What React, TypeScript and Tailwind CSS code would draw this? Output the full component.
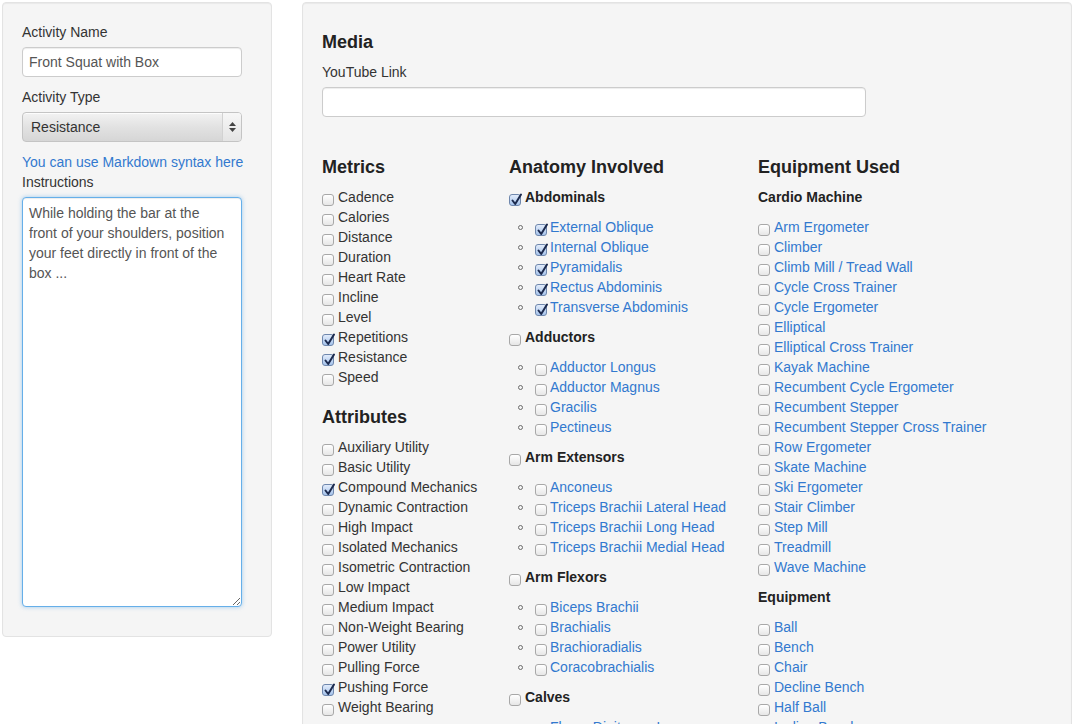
import React from 'react';

type Item = [string, boolean];

const metrics: Item[] = [
  ['Cadence', false], ['Calories', false], ['Distance', false], ['Duration', false],
  ['Heart Rate', false], ['Incline', false], ['Level', false], ['Repetitions', true],
  ['Resistance', true], ['Speed', false],
];

const attributes: Item[] = [
  ['Auxiliary Utility', false], ['Basic Utility', false], ['Compound Mechanics', true],
  ['Dynamic Contraction', false], ['High Impact', false], ['Isolated Mechanics', false],
  ['Isometric Contraction', false], ['Low Impact', false], ['Medium Impact', false],
  ['Non-Weight Bearing', false], ['Power Utility', false], ['Pulling Force', false],
  ['Pushing Force', true], ['Weight Bearing', false],
];

const anatomy: { name: string; checked: boolean; subs: Item[] }[] = [
  { name: 'Abdominals', checked: true, subs: [['External Oblique', true], ['Internal Oblique', true], ['Pyramidalis', true], ['Rectus Abdominis', true], ['Transverse Abdominis', true]] },
  { name: 'Adductors', checked: false, subs: [['Adductor Longus', false], ['Adductor Magnus', false], ['Gracilis', false], ['Pectineus', false]] },
  { name: 'Arm Extensors', checked: false, subs: [['Anconeus', false], ['Triceps Brachii Lateral Head', false], ['Triceps Brachii Long Head', false], ['Triceps Brachii Medial Head', false]] },
  { name: 'Arm Flexors', checked: false, subs: [['Biceps Brachii', false], ['Brachialis', false], ['Brachioradialis', false], ['Coracobrachialis', false]] },
  { name: 'Calves', checked: false, subs: [['Flexor Digitorum Longus', false], ['Gastrocnemius', false], ['Soleus', false]] },
];

const cardio = [
  'Arm Ergometer', 'Climber', 'Climb Mill / Tread Wall', 'Cycle Cross Trainer', 'Cycle Ergometer',
  'Elliptical', 'Elliptical Cross Trainer', 'Kayak Machine', 'Recumbent Cycle Ergometer',
  'Recumbent Stepper', 'Recumbent Stepper Cross Trainer', 'Row Ergometer', 'Skate Machine',
  'Ski Ergometer', 'Stair Climber', 'Step Mill', 'Treadmill', 'Wave Machine',
];

const equipment = ['Ball', 'Bench', 'Chair', 'Decline Bench', 'Half Ball', 'Incline Bench', 'Platform', 'Step'];

function Box({ checked }: { checked?: boolean }) {
  return (
    <span
      className={
        'relative mt-[7px] block h-[12px] w-[12px] shrink-0 rounded-[3px] border ' +
        (checked
          ? 'border-[#6f87ad] bg-linear-to-b from-[#e2ecfb] to-[#a7c4ec]'
          : 'border-[#a8a8a8] bg-linear-to-b from-white to-[#e6e6e6]')
      }
    >
      {checked && (
        <svg className="absolute left-[1px] top-[-2px] overflow-visible" width="11" height="13" viewBox="0 0 11 13">
          <path d="M1.5 7.5 L4.2 11 L10 1.5" fill="none" stroke="#1c2a4e" strokeWidth="2" strokeLinecap="round" strokeLinejoin="round" />
        </svg>
      )}
    </span>
  );
}

function PlainRow({ label, checked }: { label: string; checked: boolean }) {
  return (
    <div className="flex items-start gap-[4px] leading-5">
      <Box checked={checked} />
      <span>{label}</span>
    </div>
  );
}

function LinkRow({ label, checked }: { label: string; checked?: boolean }) {
  return (
    <div className="flex items-start gap-[4px] leading-5">
      <Box checked={checked} />
      <span className="text-[#3279cf]">{label}</span>
    </div>
  );
}

function SubRow({ label, checked }: { label: string; checked: boolean }) {
  return (
    <div className="flex items-start leading-5">
      <span className="ml-[9px] mt-[8px] block h-[5px] w-[5px] shrink-0 rounded-full border border-[#6b6b6b]" />
      <span className="ml-[12px] flex">
        <Box checked={checked} />
      </span>
      <span className="ml-[3px] text-[#3279cf]">{label}</span>
    </div>
  );
}

export default function App() {
  return (
    <div className="min-h-[724px] bg-white pl-[2px] pt-[2px] font-['Liberation_Sans',Arial,sans-serif] text-[14px] text-[#333]">
      <div className="flex items-start gap-[30px]">
        {/* Left well */}
        <div className="w-[270px] shrink-0 rounded-[4px] border border-[#e3e3e3] bg-[#f5f5f5] px-[19px] pb-[29px] pt-[19px] shadow-[inset_0_1px_1px_rgba(0,0,0,0.05)]">
          <div className="leading-5">Activity Name</div>
          <div className="mt-[5px] flex h-[30px] w-[220px] items-center rounded-[4px] border border-[#ccc] bg-white px-[6px] text-[#555] shadow-[inset_0_1px_1px_rgba(0,0,0,0.075)]">
            Front Squat with Box
          </div>
          <div className="mt-[10px] leading-5">Activity Type</div>
          <div className="mt-[5px] flex h-[30px] w-[220px] items-stretch overflow-hidden rounded-[4px] border border-[#c4c4c4] bg-linear-to-b from-[#f2f2f2] via-[#e2e2e2] to-[#d6d6d6] shadow-[inset_0_1px_0_rgba(255,255,255,0.8)]">
            <div className="flex flex-1 items-center pl-[8px] text-[#333]">Resistance</div>
            <div className="flex w-[19px] flex-col items-center justify-center gap-[2px] border-l border-[#d2d2d2] bg-linear-to-b from-[#f7f7f7] to-[#e4e4e4]">
              <svg width="7" height="4" viewBox="0 0 7 4"><path d="M0 4 L3.5 0 L7 4 Z" fill="#444" /></svg>
              <svg width="7" height="4" viewBox="0 0 7 4"><path d="M0 0 L3.5 4 L7 0 Z" fill="#444" /></svg>
            </div>
          </div>
          <div className="mt-[10px] leading-5 text-[#3279cf]">You can use Markdown syntax here</div>
          <div className="leading-5">Instructions</div>
          <textarea
            readOnly
            className="mt-[5px] block h-[410px] w-[220px] resize-y rounded-[4px] border border-[#66afe9] bg-white py-[5px] pl-[6px] pr-[14px] leading-5 text-[#555] shadow-[inset_0_1px_1px_rgba(0,0,0,0.075),0_0_4px_rgba(102,175,233,0.6)] outline-none"
            defaultValue="While holding the bar at the front of your shoulders, position your feet directly in front of the box ..."
          />
        </div>

        {/* Right well */}
        <div className="w-[770px] shrink-0 rounded-[4px] border border-[#e3e3e3] bg-[#f5f5f5] px-[19px] pb-[19px] pt-[19px] shadow-[inset_0_1px_1px_rgba(0,0,0,0.05)]">
          <h4 className="mt-[10px] text-[18px] font-bold leading-5 text-[#222]">Media</h4>
          <div className="mt-[10px] leading-5">YouTube Link</div>
          <div className="mt-[5px] h-[30px] w-[544px] rounded-[4px] border border-[#ccc] bg-white shadow-[inset_0_1px_1px_rgba(0,0,0,0.075)]" />

          <div className="mt-[40px] flex items-start">
            {/* Metrics + Attributes */}
            <div className="w-[187px] shrink-0">
              <h4 className="text-[18px] font-bold leading-5 text-[#222]">Metrics</h4>
              <div className="mt-[10px]">
                {metrics.map(([l, c]) => <PlainRow key={l} label={l} checked={c} />)}
              </div>
              <h4 className="mt-[20px] text-[18px] font-bold leading-5 text-[#222]">Attributes</h4>
              <div className="mt-[10px]">
                {attributes.map(([l, c]) => <PlainRow key={l} label={l} checked={c} />)}
              </div>
            </div>

            {/* Anatomy */}
            <div className="w-[249px] shrink-0">
              <h4 className="text-[18px] font-bold leading-5 text-[#222]">Anatomy Involved</h4>
              <div className="mt-[10px] flex flex-col gap-[10px]">
                {anatomy.map((g) => (
                  <div key={g.name}>
                    <div className="flex items-start gap-[4px] leading-5">
                      <Box checked={g.checked} />
                      <span className="font-bold text-[#222]">{g.name}</span>
                    </div>
                    <div className="mt-[10px]">
                      {g.subs.map(([l, c]) => <SubRow key={l} label={l} checked={c} />)}
                    </div>
                  </div>
                ))}
              </div>
            </div>

            {/* Equipment */}
            <div className="flex-1">
              <h4 className="text-[18px] font-bold leading-5 text-[#222]">Equipment Used</h4>
              <div className="mt-[10px] font-bold leading-5 text-[#222]">Cardio Machine</div>
              <div className="mt-[10px]">
                {cardio.map((l) => <LinkRow key={l} label={l} />)}
              </div>
              <div className="mt-[10px] font-bold leading-5 text-[#222]">Equipment</div>
              <div className="mt-[10px]">
                {equipment.map((l) => <LinkRow key={l} label={l} />)}
              </div>
            </div>
          </div>
        </div>
      </div>
    </div>
  );
}
